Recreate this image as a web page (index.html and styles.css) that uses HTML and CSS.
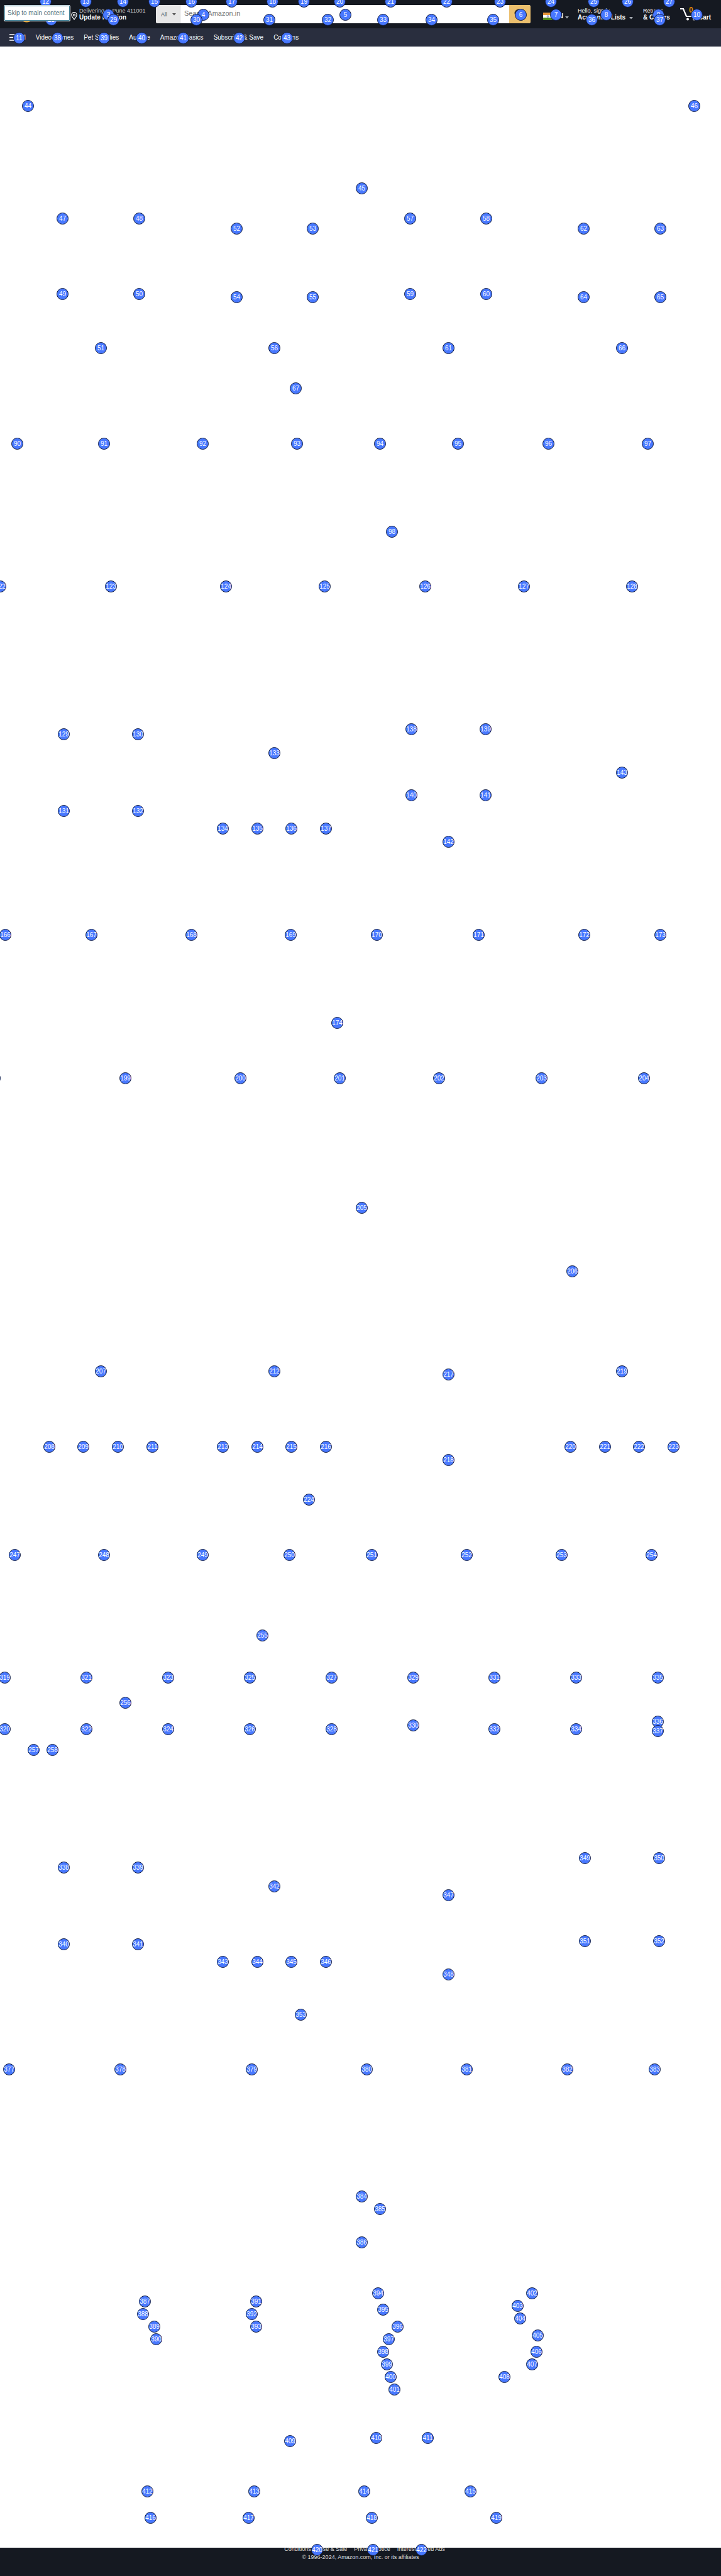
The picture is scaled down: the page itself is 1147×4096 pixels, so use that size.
FILE: index.html
```html
<!DOCTYPE html>
<html lang="en">
<head>
<meta charset="utf-8">
<title>Amazon.in</title>
<link rel="stylesheet" href="styles.css">
</head>
<body>
<a class="skip" href="#main">Skip to main content</a>
<header class="topbar">
  <a class="logo" href="#" aria-label="Amazon.in">
    <svg width="105" height="45" viewBox="0 0 105 45" aria-hidden="true"><path d="M25 31Q34.500 40 44 31Z" fill="#e8960c"/></svg>
  </a>
  <a class="location" href="#">
    <svg width="10" height="13" viewBox="0 0 10 13" fill="none" stroke="#fff" aria-hidden="true"><path d="M5 12C3.500 9.500 .8 7.500 .8 4.800a4.200 4.200 0 0 1 8.400 0C9.200 7.500 6.500 9.500 5 12Z" stroke-width="1.200"/><circle cx="5" cy="4.900" r="1.500" stroke-width="1.200"/></svg>
    <span class="two-line"><span class="small muted">Delivering to Pune 411001</span><span class="strong">Update location</span></span>
  </a>
  <form class="search">
    <div class="scope">
      <select aria-label="Search in"><option>All</option></select>
      <svg class="scope-caret" width="6" height="4" viewBox="0 0 6 4" aria-hidden="true"><path d="M0 0h6L3 3.500Z" fill="#555"/></svg>
    </div>
    <input type="text" placeholder="Search Amazon.in" aria-label="Search Amazon.in">
    <button type="submit" aria-label="Go">
      <svg width="20" height="20" viewBox="0 0 20 20" fill="none" stroke="#333" stroke-width="2" aria-hidden="true"><circle cx="8" cy="8" r="5.500"/><path d="M12 12l5 5"/></svg>
    </button>
  </form>
  <nav class="tools" aria-label="Account">
    <a class="lang" href="#">
      <svg width="15" height="12" viewBox="0 0 15 12" aria-hidden="true"><path fill="#e8963a" d="M0 0h15v4H0z"/><path fill="#fff" d="M0 4h15v4H0z"/><path fill="#4f8a1c" d="M0 8h15v4H0z"/><circle cx="7.500" cy="6" r="1.500" fill="#c5c8e6" stroke="#6a6fb5" stroke-width=".5"/></svg>
      <span class="strong">EN</span>
      <svg width="6" height="4" viewBox="0 0 6 4" aria-hidden="true"><path d="M0 0h6L3 3.500Z" fill="#a7acb2"/></svg>
    </a>
    <a class="two-line" href="#"><span class="small">Hello, sign in</span><span class="strong caret-row">Account &amp; Lists <svg width="6" height="4" viewBox="0 0 6 4" aria-hidden="true"><path d="M0 0h6L3 3.500Z" fill="#a7acb2"/></svg></span></a>
    <a class="two-line" href="#"><span class="small">Returns</span><span class="strong">&amp; Orders</span></a>
    <a class="cart" href="#">
      <svg width="27" height="21" viewBox="0 0 27 21" aria-hidden="true"><path d="M0 2h5l5 12h14" fill="none" stroke="#fff" stroke-width="2.200"/><circle cx="12" cy="18.500" r="2" fill="#fff"/><circle cx="22" cy="18.500" r="2" fill="#fff"/></svg>
      <span class="count">0</span>
      <span class="strong">Cart</span>
    </a>
  </nav>
</header>
<nav class="subnav" aria-label="Departments">
  <a class="menu" href="#"><svg width="11" height="11" viewBox="0 0 11 11" aria-hidden="true"><path d="M0 1h11M0 5.500h11M0 10h11" stroke="#fff" stroke-width="1.300"/></svg><span class="strong">All</span></a>
  <a href="#">Video Games</a>
  <a href="#">Pet Supplies</a>
  <a href="#">Audible</a>
  <a href="#">Amazon Basics</a>
  <a href="#">Subscribe &amp; Save</a>
  <a href="#">Coupons</a>
</nav>
<main id="main"></main>
<footer class="footer">
  <div class="legal"><a href="#">Conditions of Use &amp; Sale</a><a href="#">Privacy Notice</a><a href="#">Interest-Based Ads</a></div>
  <div>© 1996-2024, Amazon.com, Inc. or its affiliates</div>
</footer>
<div class="pins" id="pins"></div>
<script src="pins.js"></script>
</body>
</html>
```
FILE: styles.css
```css
* { box-sizing: border-box; }

body {
  position: relative;
  display: flex;
  flex-direction: column;
  min-height: 100vh;
  margin: 0;
  overflow-x: hidden;
  background: #fff;
  font: 10px/11px "Liberation Sans", Arial, sans-serif;
}

a { color: inherit; text-decoration: none; }
svg { display: block; flex: none; }

.skip {
  position: absolute;
  z-index: 3;
  left: 6px;
  top: 8px;
  width: 106px;
  height: 26px;
  padding: 5px;
  border: 1px solid #e4eaec;
  border-radius: 2px;
  box-shadow: inset 0 0 0 1px #3f7f95;
  background: #fff;
  color: #4a7082;
  line-height: 14px;
  white-space: nowrap;
}

.topbar {
  display: flex;
  align-items: center;
  height: 45px;
  background: #151921;
  color: #fff;
  white-space: nowrap;
}

.logo { margin-left: 8px; }
.location { display: flex; align-items: center; gap: 3px; flex: 0 0 135px; }
.location svg { margin-top: 6px; }
.two-line { display: flex; flex-direction: column; }
.small { font-size: 9px; line-height: 10px; }
.muted { color: #c6c6c6; }
.strong { font-weight: 700; }
.caret-row { display: flex; align-items: center; gap: 6px; }
.caret-row svg { margin-top: 2px; }

.search { display: flex; flex: 1; height: 29px; border-radius: 3px; overflow: hidden; background: #fff; }
.scope { position: relative; width: 39px; border-right: 1px solid #cdcdcd; background: #e6e6e6; }
.scope select {
  width: 100%;
  height: 100%;
  padding: 0 0 0 8px;
  border: 0;
  background: none;
  appearance: none;
  color: #555;
  font: 9px "Liberation Sans", Arial, sans-serif;
}
.scope-caret { position: absolute; right: 6px; top: 13px; }
.search input {
  flex: 1;
  min-width: 0;
  padding: 0 6px 3px;
  border: 0;
  background: #fff;
  font: 11px "Liberation Sans", Arial, sans-serif;
}
.search input::placeholder { color: #757575; }
.search button { width: 34px; padding: 0 7px; border: 0; background: #ebbf6e; }

.tools { display: grid; grid-template-columns: 55px 104px 59px 65px; margin-left: 20px; align-items: center; }
.lang { display: flex; align-items: center; gap: 3px; margin-top: 6px; }
.lang svg:last-child { margin-top: 4px; }
.cart { position: relative; display: flex; align-items: flex-end; gap: 2px; }
.count { position: absolute; left: 14px; top: 0; color: #d8860b; font-size: 12px; line-height: 8px; font-weight: 700; }

.subnav { display: flex; align-items: center; gap: 16px; height: 29px; padding: 0 15px; background: #292e3e; color: #fff; white-space: nowrap; }
.menu { display: flex; align-items: center; gap: 2px; }

main { flex: 1; }

.footer { height: 45px; overflow: hidden; background: #151921; color: #ddd; font-size: 9px; line-height: 13px; text-align: center; }
.legal { display: flex; justify-content: center; gap: 11px; margin-top: -4px; padding-left: 13px; }

.pins { position: absolute; z-index: 2; inset: 0; overflow: hidden; pointer-events: none; }
.pin {
  position: absolute;
  width: 19px;
  height: 19px;
  margin: -10px 0 0 -10px;
  border: 1px solid #101c42;
  border-radius: 50%;
  background: #4878ff;
  color: #fff;
  line-height: 17px;
  display: flex;
  justify-content: center;
}
```
FILE: pins.js
```js
// Each row: shared y, then [label, x] pairs.
const rows = [
  [3, [12,73],[13,137],[14,196],[15,246],[16,305],[17,369],[18,434],[19,484],[20,541],[21,622],[22,711],[23,796],[24,877],[25,945],[26,999],[27,1065]],
  [24, [3,173],[4,324],[5,550],[6,829],[7,885],[8,965],[9,1048],[10,1109]],
  [32, [28,82],[29,181],[30,313],[31,429],[32,522],[33,610],[34,687],[35,785],[36,942],[37,1050]],
  [61, [11,31],[38,92],[39,166],[40,226],[41,292],[42,381],[43,457]],
  [169, [44,45],[46,1105]],
  [300, [45,576]],
  [348, [47,100],[48,222],[57,653],[58,774]],
  [364, [52,377],[53,498],[62,929],[63,1051]],
  [468, [49,100],[50,222],[59,653],[60,774]],
  [473, [54,377],[55,498],[64,929],[65,1051]],
  [554, [51,161],[56,437],[61,714],[66,990]],
  [618, [67,471]],
  [706, [90,28],[91,166],[92,323],[93,473],[94,605],[95,729],[96,873],[97,1031]],
  [846, [98,624]],
  [933, [122,1],[123,177],[124,360],[125,517],[126,677],[127,834],[128,1006]],
  [1160, [138,655],[139,773]],
  [1168, [129,102],[130,220]],
  [1198, [133,437]],
  [1229, [143,990]],
  [1265, [140,655],[141,773]],
  [1290, [131,102],[132,220]],
  [1318, [134,355],[135,410],[136,464],[137,519]],
  [1339, [142,714]],
  [1487, [166,9],[167,146],[168,305],[169,463],[170,600],[171,762],[172,930],[173,1051]],
  [1627, [174,537]],
  [1715, [198,-8],[199,200],[200,383],[201,541],[202,699],[203,862],[204,1025]],
  [1921, [205,576]],
  [2022, [206,911]],
  [2181, [207,161],[212,437],[219,990]],
  [2186, [217,714]],
  [2301, [208,79],[209,133],[210,188],[211,243],[213,355],[214,410],[215,464],[216,519],[220,908],[221,963],[222,1017],[223,1072]],
  [2322, [218,714]],
  [2385, [224,492]],
  [2473, [247,24],[248,166],[249,323],[250,461],[251,592],[252,743],[253,894],[254,1037]],
  [2601, [255,418]],
  [2668, [319,8],[321,138],[323,268],[325,398],[327,528],[329,658],[331,787],[333,917],[335,1047]],
  [2708, [256,200]],
  [2738, [336,1047]],
  [2744, [330,658]],
  [2750, [320,8],[322,138],[324,268],[326,398],[328,528],[332,787],[334,917]],
  [2753, [337,1047]],
  [2783, [257,54],[258,84]],
  [2955, [349,931],[350,1049]],
  [2970, [338,102],[339,220]],
  [3000, [342,437]],
  [3014, [347,714]],
  [3087, [351,931],[352,1049]],
  [3092, [340,102],[341,220]],
  [3120, [343,355],[344,410],[345,464],[346,519]],
  [3140, [348,714]],
  [3204, [353,479]],
  [3291, [377,15],[378,192],[379,401],[380,584],[381,743],[382,903],[383,1042]],
  [3493, [384,576]],
  [3513, [385,605]],
  [3566, [386,576]],
  [3647, [394,602],[402,847]],
  [3660, [387,231],[391,408]],
  [3667, [403,824]],
  [3673, [395,610]],
  [3680, [388,228],[392,401]],
  [3687, [404,828]],
  [3700, [389,246],[393,408],[396,633]],
  [3714, [405,856]],
  [3720, [390,249],[397,619]],
  [3740, [398,610],[406,854]],
  [3760, [399,616],[407,847]],
  [3780, [400,622],[408,803]],
  [3800, [401,628]],
  [3877, [410,599],[411,681]],
  [3882, [409,462]],
  [3962, [412,235],[413,405],[414,580],[415,749]],
  [4004, [416,240],[417,396],[418,592],[419,790]],
  [4055, [420,505],[421,594],[422,671]]
];

const layer = document.getElementById("pins");
for (const [y, ...pins] of rows) {
  for (const [label, x] of pins) {
    const pin = document.createElement("span");
    pin.className = "pin";
    pin.textContent = label;
    pin.style.left = x + "px";
    pin.style.top = y + "px";
    layer.append(pin);
  }
}
```
